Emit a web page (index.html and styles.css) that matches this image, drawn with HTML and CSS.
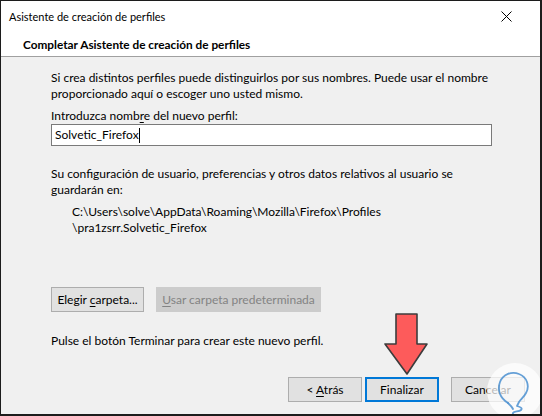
FILE: index.html
```html
<!DOCTYPE html>
<html lang="es">
<head>
<meta charset="utf-8">
<title>Asistente de creación de perfiles</title>
<link rel="stylesheet" href="styles.css">
</head>
<body>
<div class="window">
  <div class="titlebar">
    <span class="title">Asistente de creación de perfiles</span>
    <svg class="close" width="11" height="11" viewBox="0 0 11 11"><path d="M0.5 0.5L10.5 10.5M10.5 0.5L0.5 10.5" stroke="#000" stroke-width="1" fill="none"/></svg>
  </div>
  <div class="header">Completar Asistente de creación de perfiles</div>
  <div class="content">
    <p class="para">Si crea distintos perfiles puede distinguirlos por sus nombres. Puede usar el nombre<br>proporcionado aquí o escoger uno usted mismo.</p>
    <label class="label">Introduzca nomb<u>r</u>e del nuevo perfil:</label>
    <div class="input"><span class="value">Solvetic_Firefox</span><span class="caret"></span></div>
    <p class="para para-config">Su configuración de usuario, preferencias y otros datos relativos al usuario se<br>guardarán en:</p>
    <p class="path">C:\Users\solve\AppData\Roaming\Mozilla\Firefox\Profiles<br>\pra1zsrr.Solvetic_Firefox</p>
    <div class="folder-buttons">
      <div class="btn btn-choose"><span>Elegir <u>c</u>arpeta...</span></div>
      <div class="btn btn-disabled"><span><u>U</u>sar carpeta predeterminada</span></div>
    </div>
    <p class="para para-finish">Pulse el botón Terminar para crear este nuevo perfil.</p>
    <div class="footer">
      <div class="btn btn-nav"><span>&lt; <u>A</u>trás</span></div>
      <div class="btn btn-nav btn-default"><span>Finalizar</span></div>
      <div class="btn btn-nav btn-cancel"><span>Cancelar</span></div>
    </div>
  </div>
  <svg class="arrow" width="48" height="64" viewBox="0 0 48 64"><polygon points="14,1 35,1 35,31 45,31 25,61 3,31 14,31" fill="#fd5b5b" stroke="#3c3c3c" stroke-width="1.6" stroke-linejoin="round"/></svg>
  <svg class="watermark" width="58" height="58" viewBox="0 0 58 58">
    <circle cx="29" cy="29" r="28" fill="#ffffff" fill-opacity="0.72"/>
    <path d="M22 41 C14 36 11 28 14 20 C17 12 26 9 33 12 C41 15 44 24 40 31 C38 35 35 37 33 40 L31 44 C34 45 37 46 35 48 C33 50 28 49 27 51 C26 53 30 54 33 53" fill="none" stroke="#4a8fd0" stroke-opacity="0.85" stroke-width="1.8" stroke-linecap="round" stroke-linejoin="round"/>
    <path d="M22 41 C24 43 26 45 27 47" fill="none" stroke="#4a8fd0" stroke-opacity="0.85" stroke-width="1.8" stroke-linecap="round"/>
  </svg>
</div>
</body>
</html>
```
FILE: styles.css
```css
* { box-sizing: border-box; }
html, body { margin: 0; padding: 0; background: #f0f0f0; }
body { font-family: "Lato", "Noto Sans", sans-serif; font-size: 12px; color: #000; }
p { margin: 0; }

.window {
  position: relative;
  width: 542px;
  height: 416px;
  border: 1px solid #1c1c1c;
  border-right-width: 2px;
  border-bottom-width: 2px;
  display: flex;
  flex-direction: column;
  overflow: hidden;
  background: #f0f0f0;
}

.titlebar {
  height: 29px;
  background: #fff;
  display: flex;
  align-items: center;
  justify-content: space-between;
  padding: 0 28px 0 8px;
}
.title { font-size: 11px; line-height: 16px; padding-top: 2px; }
.close { display: block; margin-top: 1px; }

.header {
  background: #fff;
  font-weight: bold;
  font-size: 11.8px;
  line-height: 16px;
  padding: 7px 0 3px 22px;
  height: 27px;
  border-bottom: 1px solid #a0a0a0;
}

.content {
  flex: 1;
  display: flex;
  flex-direction: column;
  padding: 13px 15px 12px 50px;
  line-height: 16px;
}

.label { display: block; margin-top: 6px; }
.label u, .btn u { text-decoration-thickness: 1px; text-underline-offset: 2px; }

.input {
  width: 441px;
  height: 22px;
  background: #fff;
  border: 1px solid #7a7a7a;
  display: flex;
  align-items: center;
  padding-left: 3px;
}
.caret { display: inline-block; width: 1px; height: 15px; background: #000; }

.para-config { margin-top: 20px; }
.path { margin-top: 6px; padding-left: 21px; }

.folder-buttons { display: flex; gap: 12px; margin-top: 51px; }

.btn {
  height: 25px;
  display: flex;
  align-items: center;
  justify-content: center;
  background: #e1e1e1;
  border: 1px solid #adadad;
  white-space: nowrap;
}
.btn-choose { width: 93px; }
.btn-disabled { width: 165px; background: #cccccc; border-color: #cccccc; color: #838383; }

.para-finish { margin-top: 21px; }

.footer {
  margin-top: auto;
  display: flex;
  justify-content: flex-end;
}
.btn-nav { width: 74px; }
.btn-default { border: 2px solid #0078d7; margin-left: 3px; }
.btn-cancel { margin-left: 12px; }

.arrow { position: absolute; left: 381px; top: 312px; }
.watermark { position: absolute; left: 485px; top: 361px; }
```
